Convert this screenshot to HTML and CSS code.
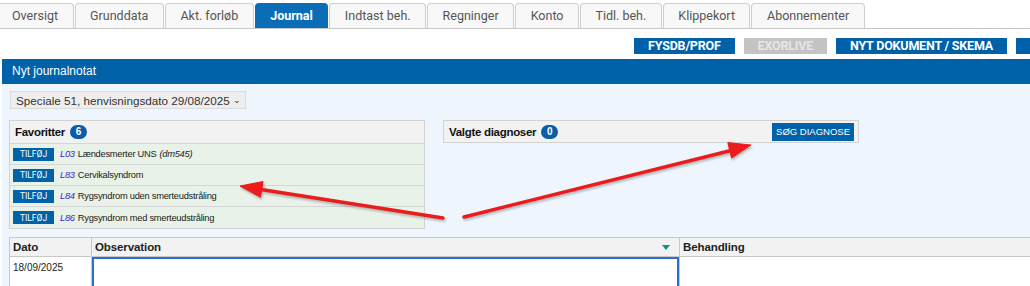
FILE: index.html
```html
<!DOCTYPE html>
<html lang="da">
<head>
    <meta charset="UTF-8">
    <title>Journal</title>
    <link rel="stylesheet" href="styles.css">
</head>
<body>
    <nav class="tabs">
        <a class="tab">Oversigt</a>
        <a class="tab">Grunddata</a>
        <a class="tab">Akt. forløb</a>
        <a class="tab active">Journal</a>
        <a class="tab">Indtast beh.</a>
        <a class="tab">Regninger</a>
        <a class="tab">Konto</a>
        <a class="tab">Tidl. beh.</a>
        <a class="tab">Klippekort</a>
        <a class="tab">Abonnementer</a>
    </nav>

    <div class="actions">
        <button class="action-btn">FYSDB/PROF</button>
        <button class="action-btn disabled">EXORLIVE</button>
        <button class="action-btn">NYT DOKUMENT / SKEMA</button>
        <button class="action-btn cut"></button>
    </div>

    <section class="note">
        <div class="note-header">Nyt journalnotat</div>
        <div class="note-body">
            <div class="select">Speciale 51, henvisningsdato 29/08/2025 <span class="chev">&#8964;</span></div>

            <div class="diag-row">
                <div class="box">
                    <div class="box-head">Favoritter <span class="badge">6</span></div>
                    <div class="fav"><button class="add-btn">TILFØJ</button><i class="code">L03</i> Lændesmerter UNS <i>(dm545)</i></div>
                    <div class="fav"><button class="add-btn">TILFØJ</button><i class="code">L83</i> Cervikalsyndrom</div>
                    <div class="fav"><button class="add-btn">TILFØJ</button><i class="code">L84</i> Rygsyndrom uden smerteudstråling</div>
                    <div class="fav"><button class="add-btn">TILFØJ</button><i class="code">L86</i> Rygsyndrom med smerteudstråling</div>
                </div>
                <div class="box chosen">
                    <div class="box-head">Valgte diagnoser <span class="badge">0</span>
                        <button class="search-btn">SØG DIAGNOSE</button>
                    </div>
                </div>
            </div>

            <div class="journal">
                <div class="col col-date">
                    <div class="col-head">Dato</div>
                    <div class="cell">18/09/2025</div>
                </div>
                <div class="col col-obs">
                    <div class="col-head">Observation <span class="tri"></span></div>
                    <div class="textarea"></div>
                </div>
                <div class="col col-beh">
                    <div class="col-head">Behandling</div>
                    <div class="cell"></div>
                </div>
            </div>
        </div>
    </section>

    <svg class="arrows" width="1030" height="286" viewBox="0 0 1030 286">
        <g fill="#ec1c1c" stroke="#ec1c1c">
            <line x1="443" y1="218" x2="258" y2="189" stroke-width="3.5" stroke-linecap="round"/>
            <polygon points="240,186 263,181.5 260.5,197.3" stroke-width="1"/>
            <line x1="464" y1="217" x2="733" y2="150" stroke-width="3.5" stroke-linecap="round"/>
            <polygon points="751,145 731.6,158.1 727.8,142.6" stroke-width="1"/>
        </g>
    </svg>
</body>
</html>
```

FILE: styles.css
```css
* {
    margin: 0;
    padding: 0;
    box-sizing: border-box;
}

body {
    width: 1030px;
    height: 286px;
    overflow: hidden;
    position: relative;
    background: #fff;
    font-family: "Liberation Sans", Arial, sans-serif;
    color: #222;
}

/* tabs */
.tabs {
    display: flex;
    padding-top: 3px;
    border-bottom: 1px solid #c9c9c9;
    height: 29px;
}

.tab {
    height: 25px;
    line-height: 24px;
    padding: 0 14.5px;
    border: 1px solid #cfcfcf;
    border-bottom: none;
    border-radius: 4px 4px 0 0;
    margin-right: 1px;
    background: #f8f8f8;
    font-family: Roboto, sans-serif;
    font-size: 12.5px;
    color: #555;
    text-align: center;
}

.tab:first-child {
    border-left: none;
    border-radius: 0 4px 0 0;
    padding-left: 12px;
}

.tab.active {
    background: #0b6db5;
    border-color: #0b6db5;
    color: #fff;
    font-weight: bold;
}

/* action buttons */
.actions {
    display: flex;
    justify-content: flex-end;
    gap: 9px;
    margin-top: 9px;
    margin-right: -27px;
}

.action-btn {
    height: 16px;
    padding: 0 14px;
    border: none;
    background: #0060a8;
    color: #fff;
    font-family: Roboto, sans-serif;
    font-weight: bold;
    font-size: 12.5px;
    line-height: 16px;
    letter-spacing: -0.2px;
}

.action-btn.disabled {
    background: #c4c4c4;
    color: #e6e6e6;
}

.action-btn.cut {
    width: 41px;
}

/* note panel */
.note {
    margin: 5px 0 0 2px;
}

.note-header {
    height: 25px;
    line-height: 25px;
    padding-left: 10px;
    background: #0062a9;
    color: #fff;
    font-size: 12px;
}

.note-body {
    background: #eef5fc;
    padding: 7px 0 0 7px;
    height: 210px;
}

.select {
    display: inline-block;
    margin-left: 1px;
    height: 18px;
    line-height: 17px;
    padding: 0 4px 0 5px;
    background: #eeeeee;
    border: 1px solid #dcdcdc;
    font-size: 11.7px;
    color: #333;
}

.chev {
    font-size: 9px;
    vertical-align: 2px;
}

/* diagnoses */
.diag-row {
    display: flex;
    align-items: flex-start;
    gap: 18px;
    margin-top: 11px;
}

.box {
    width: 416px;
    border: 1px solid #d2d2d2;
    background: #e8f2e8;
}

.box-head {
    display: flex;
    align-items: center;
    gap: 5px;
    height: 23px;
    padding-left: 5px;
    background: #f2f2f2;
    border-bottom: 1px solid #d6d6d6;
    font-size: 11.5px;
    letter-spacing: -0.3px;
    font-weight: bold;
    color: #111;
}

.chosen .box-head {
    border-bottom: none;
    height: 21px;
}

.badge {
    display: inline-block;
    min-width: 17px;
    height: 14px;
    line-height: 14px;
    padding: 0 4px;
    border-radius: 8px;
    background: #0a5ea8;
    color: #fff;
    font-size: 10px;
    letter-spacing: 0;
    text-align: center;
}

.search-btn {
    margin-left: auto;
    margin-right: 4px;
    height: 18px;
    padding: 0 4px;
    border: none;
    background: #0062a9;
    color: #fff;
    font-size: 9.5px;
    letter-spacing: 0;
    font-weight: normal;
}

.fav {
    display: flex;
    align-items: center;
    gap: 3px;
    height: 21px;
    padding-left: 3px;
    border-bottom: 1px solid #d6d6d6;
    font-size: 9.3px;
    letter-spacing: -0.25px;
    color: #1a1a1a;
}

.fav:last-child {
    border-bottom: none;
}

.add-btn {
    width: 41px;
    height: 13px;
    margin-right: 3px;
    border: none;
    background: #0062a9;
    color: #fff;
    font-family: Roboto, sans-serif;
    font-size: 8.5px;
    letter-spacing: 0;
}

.code {
    color: #2a2ad8;
}

/* journal table */
.journal {
    display: flex;
    margin-top: 8px;
    border-top: 1px solid #c8c8c8;
    border-left: 1px solid #c8c8c8;
}

.col-head {
    display: flex;
    align-items: center;
    height: 19px;
    padding-left: 3px;
    background: #f2f2f2;
    border-bottom: 1px solid #c8c8c8;
    font-size: 11.5px;
    letter-spacing: -0.1px;
    font-weight: bold;
    color: #222;
}

.col {
    background: #fff;
    height: 60px;
}

.col-date {
    width: 82px;
    border-right: 1px solid #c8c8c8;
}

.col-obs {
    width: 587px;
}

.col-beh {
    flex: 1;
    border-left: 1px solid #c8c8c8;
}

.cell {
    padding: 5px 3px;
    font-size: 10px;
}

.tri {
    margin-left: auto;
    margin-right: 9px;
    border-left: 4px solid transparent;
    border-right: 4px solid transparent;
    border-top: 5px solid #138f84;
}

.textarea {
    height: 40px;
    border: 2px solid #2a6fd8;
    background: #fff;
}

/* annotation arrows */
.arrows {
    position: absolute;
    left: 0;
    top: 0;
    pointer-events: none;
    filter: drop-shadow(1px 2px 1px rgba(0, 0, 0, 0.25));
}
```
